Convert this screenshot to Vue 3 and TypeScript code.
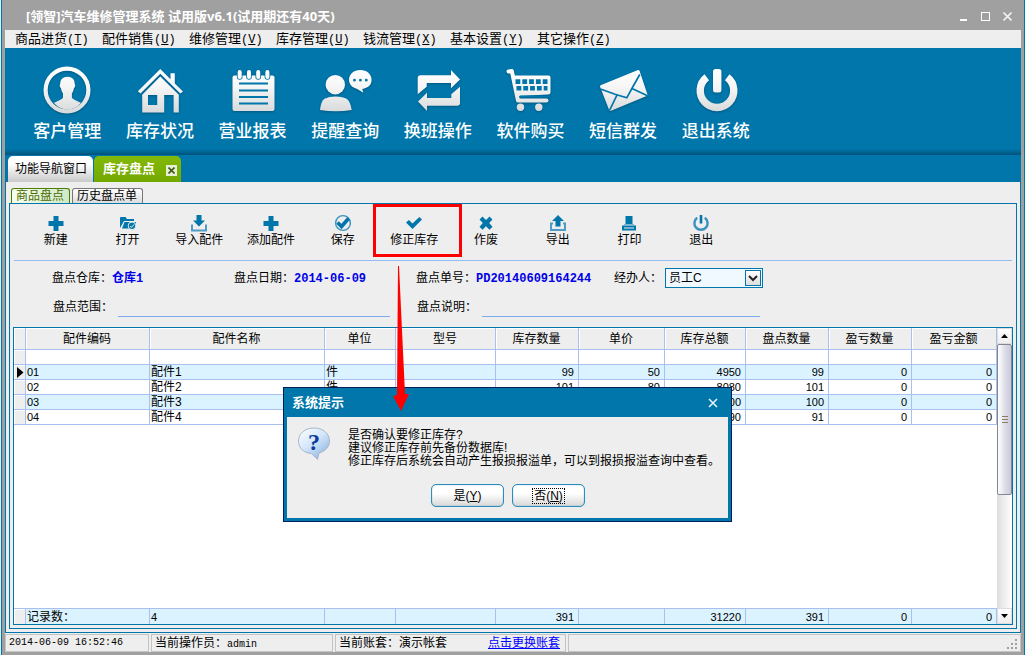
<script setup lang="ts">
import { ref } from 'vue'

interface Accel { text: string; key: string }
interface Row { code: string; name: string; unit: string; model: string; stock: number; price: number; total: number; count: number; diff: number; amount: number }

const menus: Accel[] = [
  { text: '商品进货', key: 'T' },
  { text: '配件销售', key: 'U' },
  { text: '维修管理', key: 'V' },
  { text: '库存管理', key: 'U' },
  { text: '钱流管理', key: 'X' },
  { text: '基本设置', key: 'Y' },
  { text: '其它操作', key: 'Z' },
]

const launchers: string[] = ['客户管理', '库存状况', '营业报表', '提醒查询', '换班操作', '软件购买', '短信群发', '退出系统']

const tools: { icon: string; label: string }[] = [
  { icon: 'plus', label: '新建' },
  { icon: 'folder', label: '打开' },
  { icon: 'import', label: '导入配件' },
  { icon: 'plus', label: '添加配件' },
  { icon: 'save', label: '保存' },
  { icon: 'check', label: '修正库存' },
  { icon: 'cross', label: '作废' },
  { icon: 'export', label: '导出' },
  { icon: 'print', label: '打印' },
  { icon: 'power', label: '退出' },
]

const headers: string[] = ['配件编码', '配件名称', '单位', '型号', '库存数量', '单价', '库存总额', '盘点数量', '盈亏数量', '盈亏金额']

const rows: Row[] = [
  { code: '01', name: '配件1', unit: '件', model: '', stock: 99, price: 50, total: 4950, count: 99, diff: 0, amount: 0 },
  { code: '02', name: '配件2', unit: '件', model: '', stock: 101, price: 80, total: 8080, count: 101, diff: 0, amount: 0 },
  { code: '03', name: '配件3', unit: '件', model: '', stock: 100, price: 100, total: 10000, count: 100, diff: 0, amount: 0 },
  { code: '04', name: '配件4', unit: '件', model: '', stock: 91, price: 90, total: 8190, count: 91, diff: 0, amount: 0 },
]

const totals: string[] = ['记录数：', '4', '', '', '391', '', '31220', '391', '0', '0']
const operator = ref('员工C')
const range = ref('')
const remark = ref('')
</script>

<template>
  <div class="window">
    <svg class="defs" aria-hidden="true">
      <defs>
        <linearGradient id="silver" gradientUnits="userSpaceOnUse" x1="0" y1="4" x2="0" y2="46">
          <stop offset="0" stop-color="#ffffff" />
          <stop offset="0.4" stop-color="#f6f6f6" />
          <stop offset="1" stop-color="#d8dadb" />
        </linearGradient>
        <linearGradient id="bubble" x1="0" y1="0" x2="0.8" y2="1">
          <stop offset="0" stop-color="#ffffff" />
          <stop offset="0.5" stop-color="#d3e6fb" />
          <stop offset="1" stop-color="#8fb4e0" />
        </linearGradient>
      </defs>
    </svg>

    <header class="titlebar">
      <h1>[领智]汽车维修管理系统 试用版v6.1(试用期还有40天)</h1>
      <div class="winbuttons">
        <button type="button" aria-label="最小化"><svg width="9" height="11"><rect x="1" y="8" width="7" height="2" fill="#fff" /></svg></button>
        <button type="button" aria-label="最大化"><svg width="9" height="11"><rect x="0.5" y="1.5" width="8" height="8" fill="none" stroke="#fff" /></svg></button>
        <button type="button" aria-label="关闭"><svg width="9" height="11"><path d="M0.5 1.5 L8.5 9.5 M8.5 1.5 L0.5 9.5" stroke="#f2f2f2" stroke-width="1.600" /></svg></button>
      </div>
    </header>

    <nav class="menubar">
      <button v-for="m in menus" :key="m.text" type="button">{{ m.text }}<span class="accel">(<u>{{ m.key }}</u>)</span></button>
    </nav>

    <div class="launchbar">
      <button v-for="(label, i) in launchers" :key="label" type="button">
        <svg class="big" viewBox="0 0 48 48" width="48" height="48" aria-hidden="true">
          <g v-if="i === 0">
            <circle class="arc" cx="24" cy="24" r="21.4" stroke-width="4.2" />
            <path class="fill" d="M24.5 10.8c4.8 0 7.3 3 7.2 7.2 1 .6.5 3.600-.8 4.200-.3 2.400-1.200 4-2 5v4.200c1.500 2.600 6 3.400 9 5.600Q32.500 43.500 24.500 43.500T11 37c3-2.200 7.500-3 9-5.600v-4.200c-.8-1-1.700-2.600-2-5-1.300-.6-1.800-3.600-.8-4.200-.1-4.200 2.500-7.200 7.300-7.200z" />
          </g>
          <g v-else-if="i === 1">
            <path class="fill" d="M24.300 3 L34.500 13.200 V7.300 H38.800 V17.500 L47 25.500 L44.300 27.500 L24.300 7.800 L4.500 27.500 L1.800 25.200 Z" />
            <path class="fill" fill-rule="evenodd" d="M24.300 10.500 L42.800 28.800 V46.500 H37.600 V29 H28.200 V46.500 H6.200 V28.800 Z M12 29 V39 H21.200 V29 Z" />
          </g>
          <g v-else-if="i === 2">
            <rect class="fill" x="3.500" y="9.500" width="42" height="35.500" rx="2" />
            <path class="cut" stroke-width="5.600" stroke-linecap="round" d="M10.700 8v3M20 8v3M29.200 8v3M38.400 8v3" />
            <path class="arc" stroke-width="4" stroke-linecap="round" d="M10.700 6v5M20 6v5M29.200 6v5M38.400 6v5" />
            <path class="cut" stroke-width="2" d="M10 17.500h29M10 24.500h29M10 31h29M10 37.500h29" />
          </g>
          <g v-else-if="i === 3">
            <circle class="fill" cx="14.300" cy="18.700" r="9.700" />
            <path class="fill" d="M-1 44 Q0 35 3.500 32.700 Q8 30.500 14.500 30.500 Q22 30.500 26 33 Q29.500 36 30.700 44 Q15 46.500 -1 44 Z" />
            <path class="fill" d="M39.300 4c6.500 0 11.300 4.200 11.300 9.800 0 5.200-3.600 8.200-9.300 9.200l1 3.800-6.500-4C31.500 21.800 28 18.500 28 13.800 28 8.200 32.800 4 39.300 4z" />
            <path class="cut" stroke-width="2.800" stroke-linecap="round" d="M33.500 14.200h0M39.400 14.200h0M45.300 14.200h0" />
          </g>
          <g v-else-if="i === 4">
            <path class="fill" d="M3.700 28.300 V12 Q3.700 9.300 6.500 9.300 H37 V4 L46 13.500 L37 22.300 V17 H12.700 V20.800 Z" />
            <path class="fill" d="M46 20.700 V37 Q46 39.700 43.200 39.700 H13 V45 L4 35.500 L13 26.700 V32 H37.300 V28.200 Z" />
          </g>
          <g v-else-if="i === 5">
            <path class="arc" stroke-width="4" stroke-linecap="round" stroke-linejoin="round" d="M2.500 5.500 L5.800 5 L12 34.500 H40.500" />
            <path class="fill" d="M7.500 9.500 H42.500 Q44.500 9.500 44.500 11.500 V26 Q44.500 28.500 42 28.500 L12 30 Z" />
            <path class="cut" stroke-width="4.600" stroke-dasharray="4.800 2" d="M9.500 15.600 H41.500 M10.500 22.300 H41.500" />
            <path class="cut" stroke-width="2" d="M14 30.500 H44" />
            <circle class="fill" cx="14.500" cy="41.200" r="3.700" />
            <circle class="fill" cx="32.800" cy="41.200" r="3.700" />
          </g>
          <g v-else-if="i === 6">
            <path class="fill" d="M1.500 19.300 L39 4 Q40.200 3.800 40.600 5 L48.800 29.500 L11.500 45 Q10.500 45 10 43.800 L1 20.500 Z" />
            <path class="cut" stroke-width="1.700" d="M1.500 23 L16 28.300 L27.800 31.800 L34 20.500 L40.800 8.500 M18.300 28.300 L10.500 44.500 M33 22.500 L49 30" />
          </g>
          <g v-else>
            <path class="arc" stroke-width="7.400" d="M14.800 11.300 A16.800 16.800 0 1 0 35.200 11.300" />
            <rect class="fill" x="21" y="3" width="8.400" height="23.500" rx="2.500" />
          </g>
        </svg>
        <span>{{ label }}</span>
      </button>
    </div>

    <div class="tabbar">
      <button class="tab" type="button">功能导航窗口</button>
      <div class="tab active">
        <button type="button">库存盘点</button>
        <button class="close" type="button" aria-label="关闭标签"><svg width="7" height="7"><path d="M0.500 0.500 L6.500 6.500 M6.500 0.500 L0.500 6.500" stroke="#3c5a10" stroke-width="1.600" /></svg></button>
      </div>
    </div>

    <main class="page">
      <div class="subtabs">
        <button class="current" type="button">商品盘点</button>
        <button type="button">历史盘点单</button>
      </div>

      <section class="panel">
        <div class="tools">
          <button v-for="t in tools" :key="t.label" type="button" :class="{ marked: t.icon === 'check' }">
            <svg viewBox="0 0 18 18" width="18" height="18" aria-hidden="true">
              <path v-if="t.icon === 'plus'" class="ink" d="M6.500 2h5v5h5v5h-5v5h-5v-5h-5V7h5z" />
              <g v-else-if="t.icon === 'folder'">
                <path class="ink" d="M1 14V4q0-1 1-1h4.500l1.500 2H15v2H5z" />
                <path class="ink" d="M5.500 8H17l-1.500 6.500H3z" />
                <circle cx="13" cy="11.800" r="3.800" fill="#0076aa" stroke="#eee" />
                <path d="M11.200 12l1.300 1.400 2.500-3" fill="none" stroke="#eee" />
              </g>
              <g v-else-if="t.icon === 'import'">
                <path class="ink" d="M6.500 1h5v5.500H15L9 12.500 3 6.500h3.500z" />
                <path d="M3 11.500H2v5h14v-5h-1" fill="none" stroke="#4f9cc4" stroke-width="2" />
              </g>
              <g v-else-if="t.icon === 'export'">
                <path class="ink" d="M6.500 12.500h5V7H15L9 1 3 7h3.500z" />
                <path d="M4 9.500H2v6.500h14V9.500h-2" fill="none" stroke="#4f9cc4" stroke-width="2" />
              </g>
              <g v-else-if="t.icon === 'save'">
                <circle cx="9" cy="9" r="7.400" fill="none" stroke="#3b91bd" stroke-width="1.400" />
                <path d="M3.500 8.500 L7.500 12.500 L14.500 4.500" fill="none" stroke="#0076aa" stroke-width="3.600" />
              </g>
              <path v-else-if="t.icon === 'check'" class="ink" d="M1 8.500 L4 6 L7.500 9.500 L14.300 3 L17 5.500 L7.500 15 Z" />
              <path v-else-if="t.icon === 'cross'" class="ink" d="M2.500 5.500 L5.500 2.500 L9 6 L12.500 2.500 L15.500 5.500 L12.200 9 L15.500 12.700 L12.500 15.700 L9 12.200 L5.500 15.700 L2.500 12.700 L5.800 9 Z" />
              <g v-else-if="t.icon === 'print'">
                <path class="ink" d="M5.500 2h7v8h-7z" />
                <path d="M4 10.500h10" stroke="#7db6d3" />
                <path d="M2 11.500h14V16.500H2z" fill="#0076aa" />
                <path d="M4 14h10" stroke="#eee" />
              </g>
              <g v-else>
                <path d="M5.200 3.800 A6.600 6.600 0 1 0 12.800 3.800" fill="none" stroke="#3b91bd" stroke-width="2.400" />
                <path class="ink" d="M7.700 1h2.600v8.500H7.700z" />
              </g>
            </svg>
            <span>{{ t.label }}</span>
          </button>
        </div>

        <form class="form" @submit.prevent>
          <div class="line first">
            <p>盘点仓库：<b>仓库<span class="mono">1</span></b></p>
            <p>盘点日期：<b class="mono">2014-06-09</b></p>
            <p>盘点单号：<b class="mono">PD20140609164244</b></p>
            <div class="pick">
              <label for="operator">经办人：</label>
              <span class="combo">
                <select id="operator" v-model="operator"><option>员工C</option></select>
                <i><svg width="10" height="7"><path d="M1 1 L5 5 L9 1" fill="none" stroke="#222" stroke-width="2" /></svg></i>
              </span>
            </div>
          </div>
          <div class="line second">
            <div class="field"><label for="range">盘点范围：</label><input id="range" v-model="range" type="text" /></div>
            <div class="field"><label for="remark">盘点说明：</label><input id="remark" v-model="remark" type="text" /></div>
          </div>
        </form>

        <div class="grid">
          <div class="sheet">
            <table>
              <colgroup><col class="c0" /><col v-for="n in 10" :key="n" :class="'c' + n" /></colgroup>
              <thead>
                <tr><th class="mark"></th><th v-for="h in headers" :key="h">{{ h }}</th></tr>
              </thead>
              <tbody>
                <tr><td class="mark"></td><td v-for="n in 10" :key="n"></td></tr>
                <tr v-for="(r, i) in rows" :key="r.code" :class="{ tint: i % 2 === 0 }">
                  <td class="mark"><svg v-if="i === 0" width="7" height="11"><path d="M0 0 L6.500 5.500 L0 11 Z" /></svg></td>
                  <td class="code">{{ r.code }}</td>
                  <td>{{ r.name }}</td>
                  <td>{{ r.unit }}</td>
                  <td>{{ r.model }}</td>
                  <td class="num">{{ r.stock }}</td>
                  <td class="num">{{ r.price }}</td>
                  <td class="num">{{ r.total }}</td>
                  <td class="num">{{ r.count }}</td>
                  <td class="num">{{ r.diff }}</td>
                  <td class="num">{{ r.amount }}</td>
                </tr>
              </tbody>
            </table>
            <table class="totals">
              <colgroup><col class="c0" /><col v-for="n in 10" :key="n" :class="'c' + n" /></colgroup>
              <tbody>
                <tr class="tint"><td class="mark"></td><td v-for="(t, i) in totals" :key="i" :class="{ code: i === 1, num: i > 3 }">{{ t }}</td></tr>
              </tbody>
            </table>
          </div>
          <div class="scroll">
            <button type="button" aria-label="向上滚动"><svg width="7" height="4"><path d="M0 4 L3.500 0 L7 4 Z" /></svg></button>
            <div class="track"><div class="thumb"><i></i><i></i><i></i></div></div>
            <button type="button" aria-label="向下滚动"><svg width="7" height="4"><path d="M0 0 L3.500 4 L7 0 Z" /></svg></button>
          </div>
        </div>
      </section>
    </main>

    <footer class="status">
      <div class="cell time">2014-06-09 16:52:46</div>
      <div class="cell who">当前操作员：<span class="small">admin</span></div>
      <div class="cell book">当前账套：演示帐套<a href="#">点击更换账套</a></div>
      <div class="cell rest">
        <svg width="11" height="11" fill="#a0a0a0"><path d="M8 0h2v2H8zM4 4h2v2H4zM8 4h2v2H8zM0 8h2v2H0zM4 8h2v2H4zM8 8h2v2H8z" /></svg>
      </div>
    </footer>

    <div class="dialog" role="dialog" aria-labelledby="dialog-title">
      <div class="dialog-head">
        <h2 id="dialog-title">系统提示</h2>
        <button type="button" aria-label="关闭对话框"><svg width="10" height="10"><path d="M1 1 L9 9 M9 1 L1 9" stroke="#e8f3f8" stroke-width="1.600" /></svg></button>
      </div>
      <div class="dialog-body">
        <div class="message">
          <svg width="34" height="34" viewBox="0 0 34 34" aria-hidden="true">
            <path d="M17 1c9 0 15.500 5.500 15.500 13 0 6-4.500 10.500-10.500 12l-1.500 6.500-6-6C7 26 1.500 21.500 1.500 14c0-7.500 6.500-13 15.500-13z" fill="url(#bubble)" stroke="#a9b8c9" />
            <text x="17" y="23" text-anchor="middle" class="question">?</text>
          </svg>
          <p>是否确认要修正库存?<br />建议修正库存前先备份数据库!<br />修正库存后系统会自动产生报损报溢单，可以到报损报溢查询中查看。</p>
        </div>
        <div class="actions">
          <button type="button"><span>是(<u>Y</u>)</span></button>
          <button type="button"><span class="focus">否(<u>N</u>)</span></button>
        </div>
      </div>
    </div>

    <svg class="pointer" width="18" height="146" viewBox="0 0 18 146" aria-hidden="true">
      <path d="M6 0 L7 0 L13 128 L17 128 L9 145 L1 130 L5 129 Z" fill="#ff0000" />
    </svg>
  </div>
</template>

<style>
html,
body {
  margin: 0;
  background: #e2edf6;
}
</style>

<style scoped>
* {
  box-sizing: border-box;
}
.window {
  position: relative;
  display: flex;
  flex-direction: column;
  min-height: 100vh;
  margin-left: 1px;
  padding: 0 3px 3px;
  border-left: 1px solid #0076aa;
  border-right: 1px solid #0076aa;
  background: #a0a0a0;
  color: #000;
  font: 12px/14px "Liberation Sans", "Noto Sans CJK SC", sans-serif;
}
h1,
h2,
p {
  margin: 0;
}
button {
  padding: 0;
  border: 0;
  background: none;
  color: inherit;
  font: inherit;
  white-space: nowrap;
}
svg {
  display: block;
}
.defs {
  position: absolute;
  width: 0;
  height: 0;
}
.mono {
  font-family: "Liberation Mono", "Noto Sans CJK SC", monospace;
}

.titlebar {
  display: flex;
  align-items: center;
  justify-content: space-between;
  height: 30px;
  padding: 2px 9px 0 21px;
  color: #fff;
}
.titlebar h1 {
  font: bold 13px/16px "Noto Sans", "Noto Sans CJK SC", sans-serif;
}
.winbuttons {
  display: flex;
  gap: 13px;
}

.menubar {
  display: flex;
  height: 18px;
  padding-left: 10px;
  background: #eee;
}
.menubar button {
  width: 87px;
  text-align: left;
  font-size: 13px;
  line-height: 16px;
}
.accel {
  font-family: "Liberation Mono", monospace;
  font-size: 12px;
}

.launchbar {
  display: grid;
  grid-template-columns: repeat(8, 1fr);
  width: 100%;
  height: 107px;
  padding: 18px 259px 0 16px;
  background: linear-gradient(#0076aa 101px, #00537a 107px);
}
.launchbar button {
  display: flex;
  flex-direction: column;
  align-items: center;
  gap: 4px;
  color: #fff;
  font: 500 17px/24px "Noto Sans CJK SC", sans-serif;
}
.big {
  flex: none;
  overflow: visible;
  filter: drop-shadow(0 1px 1px rgba(0, 50, 80, 0.45));
}
.fill {
  fill: url(#silver);
}
.arc {
  fill: none;
  stroke: url(#silver);
}
.cut {
  fill: none;
  stroke: #0076aa;
}

.tabbar {
  display: flex;
  align-items: flex-end;
  gap: 1px;
  height: 27px;
  padding-left: 3px;
  background: #0076aa;
}
.tab {
  height: 26px;
  padding: 0 6px 0 7px;
  border-radius: 5px 5px 0 0;
  background: linear-gradient(#fff 30%, #c9c9c9);
}
.tab.active {
  display: flex;
  align-items: center;
  gap: 11px;
  padding: 0 4px 0 9px;
  background: linear-gradient(#83b909, #74a800);
  color: #fff;
  font-weight: bold;
  font-size: 13px;
}
.close {
  display: grid;
  place-items: center;
  width: 11px;
  height: 11px;
  margin-top: 2px;
  background: #e6eed8;
}

.page {
  display: flex;
  flex: 1;
  flex-direction: column;
  padding: 6px 3px 3px;
  border: solid #0076aa;
  border-width: 0 1px 1px;
  background: #eee;
}
.subtabs {
  display: flex;
  gap: 2px;
  height: 15px;
  padding-left: 2px;
}
.subtabs button {
  padding: 0 5px 0 4px;
  border: 1px solid #777;
  border-bottom: 0;
  border-radius: 3px 3px 0 0;
  background: linear-gradient(#fff, #ddd);
  line-height: 14px;
}
.subtabs .current {
  border-color: #4d7d00;
  background: linear-gradient(90deg, #f6fff0, #cfe9c8);
  color: #4d6b00;
}
.panel {
  display: flex;
  flex: 1;
  flex-direction: column;
  padding: 0 3px 3px;
  border: 1px solid #0076aa;
}

.tools {
  display: grid;
  grid-template-columns: repeat(10, minmax(0, 1fr));
  height: 57px;
  margin: 0 1px;
  padding: 0 275px 3px 6px;
  border-bottom: 1px solid #94bbf2;
}
.tools button {
  display: flex;
  flex-direction: column;
  align-items: center;
  gap: 1px;
  height: 53px;
  padding-top: 10px;
}
.tools svg {
  flex: none;
}
.ink {
  fill: #0076aa;
}
.marked {
  position: relative;
}
.marked::after {
  position: absolute;
  inset: 0 -12px 0 -5px;
  border: 3px solid #f00;
  content: "";
}

.form {
  padding: 7px 0 10px;
}
.line {
  display: flex;
}
.first {
  align-items: center;
  height: 20px;
  padding-left: 39px;
}
.first p {
  flex: none;
  width: 182px;
}
.first p:nth-child(3) {
  width: 198px;
}
.first b {
  color: #0000e8;
}
.pick {
  display: flex;
  align-items: center;
  gap: 3px;
}
.combo {
  display: flex;
  width: 98px;
  height: 20px;
  border: 1px solid #0076aa;
  background: #f0f9ff;
}
.combo select {
  flex: 1;
  min-width: 0;
  padding: 0 3px;
  border: 0;
  background: none;
  appearance: none;
  color: #000;
  font: inherit;
}
.combo i {
  display: grid;
  place-items: center;
  width: 16px;
  margin: 1px;
  border: 1px solid #0076aa;
  background: linear-gradient(#fff, #ddd);
}
.second {
  gap: 27px;
  padding: 10px 0 0 40px;
}
.field {
  display: flex;
  gap: 5px;
}
.field label {
  line-height: 18px;
}
.field input {
  width: 272px;
  height: 19px;
  padding: 0;
  border: 0;
  border-bottom: 1px solid #7eabf0;
  outline: 0;
  background: none;
  font: inherit;
}
.field + .field input {
  width: 278px;
}

.grid {
  display: flex;
  flex: 1;
  border: 1px solid #0076aa;
  background: #fff;
}
.sheet {
  display: flex;
  flex: 1;
  flex-direction: column;
  justify-content: space-between;
  min-width: 0;
}
table {
  width: 100%;
  border-collapse: separate;
  border-spacing: 0;
  table-layout: fixed;
}
.c0 { width: 12px; }
.c1 { width: 124px; }
.c2 { width: 175px; }
.c3 { width: 71px; }
.c4 { width: 100px; }
.c5 { width: 83px; }
.c6 { width: 86px; }
.c7 { width: 81px; }
.c8 { width: 83px; }
.c9 { width: 83px; }
th,
td {
  overflow: hidden;
  height: 15px;
  padding: 0 2px 0 1px;
  border-right: 1px solid #a8bff0;
  border-bottom: 1px solid #a8bff0;
  line-height: 14px;
  text-align: left;
  font-weight: normal;
  white-space: nowrap;
}
th {
  height: 22px;
  background: #eee;
  box-shadow: inset 1px 1px #fff;
  text-align: center;
}
.mark {
  padding: 0 0 0 3px;
  background: #eee;
  box-shadow: inset 1px 1px #fff;
}
.tint td:not(.mark) {
  background: #daf3ff;
}
td.num,
td.code {
  font-size: 11px;
}
td.num {
  padding-right: 4px;
  text-align: right;
}
.totals td {
  height: 16px;
  border-top: 1px solid #a8bff0;
  border-bottom: 0;
}

.scroll {
  display: flex;
  flex-direction: column;
  width: 15px;
  background: linear-gradient(90deg, #ddd, #fff);
}
.scroll button {
  display: grid;
  place-items: center;
  height: 16px;
  border: 1px solid #ddd;
  background: linear-gradient(#fff, #eee);
}
.track {
  flex: 1;
}
.thumb {
  display: flex;
  flex-direction: column;
  align-items: center;
  justify-content: center;
  gap: 2px;
  height: 151px;
  border: 1px solid #85858f;
  border-radius: 2px;
  background: linear-gradient(90deg, #fff, #dcdce8 55%, #c9c9dc);
}
.thumb i {
  width: 6px;
  height: 1px;
  background: #8b7c62;
}

.status {
  display: flex;
  gap: 2px;
  height: 19px;
  padding-top: 1px;
  background: #eee;
}
.cell {
  height: 18px;
  padding: 0 3px;
  border: 1px solid #c4c4c4;
  line-height: 16px;
  white-space: nowrap;
}
.time {
  width: 144px;
  font: 10px/16px "Liberation Mono", monospace;
}
.who {
  width: 182px;
}
.small {
  font: 10px/14px "Liberation Mono", monospace;
}
.book {
  display: flex;
  justify-content: space-between;
  width: 231px;
  padding-right: 5px;
}
.book a {
  color: #00f;
}
.rest {
  display: flex;
  flex: 1;
  align-items: flex-end;
  justify-content: flex-end;
  padding: 0 2px 1px;
}

.dialog {
  position: absolute;
  top: 387px;
  left: 281px;
  width: 449px;
  padding: 0 3px 3px;
  border: 1px solid #001f5c;
  background: #0076aa;
}
.dialog-head {
  display: flex;
  align-items: center;
  justify-content: space-between;
  height: 29px;
  padding: 0 10px 0 5px;
  color: #fff;
}
.dialog-head h2 {
  font-size: 13px;
  line-height: 18px;
}
.dialog-body {
  height: 101px;
  padding: 10px 9px 0 10px;
  background: #eee;
}
.message {
  display: flex;
  gap: 17px;
}
.message svg {
  flex: none;
}
.message p {
  padding-top: 2px;
  line-height: 13px;
  white-space: nowrap;
}
.question {
  fill: #0a3a9c;
  font: bold 24px "Liberation Serif", serif;
}
.actions {
  display: flex;
  justify-content: center;
  gap: 8px;
  margin-top: 16px;
}
.actions button {
  display: grid;
  place-items: center;
  width: 73px;
  height: 23px;
  border: 1px solid #2b8dbb;
  border-radius: 5px;
  background: linear-gradient(#fff 40%, #d8d8d8);
  box-shadow: inset 0 0 1px #2b8dbb;
}
.actions span {
  padding: 0 1px;
  border: 1px dotted transparent;
}
.actions .focus {
  border-color: #000;
}
.pointer {
  position: absolute;
  top: 266px;
  left: 390px;
}
</style>
